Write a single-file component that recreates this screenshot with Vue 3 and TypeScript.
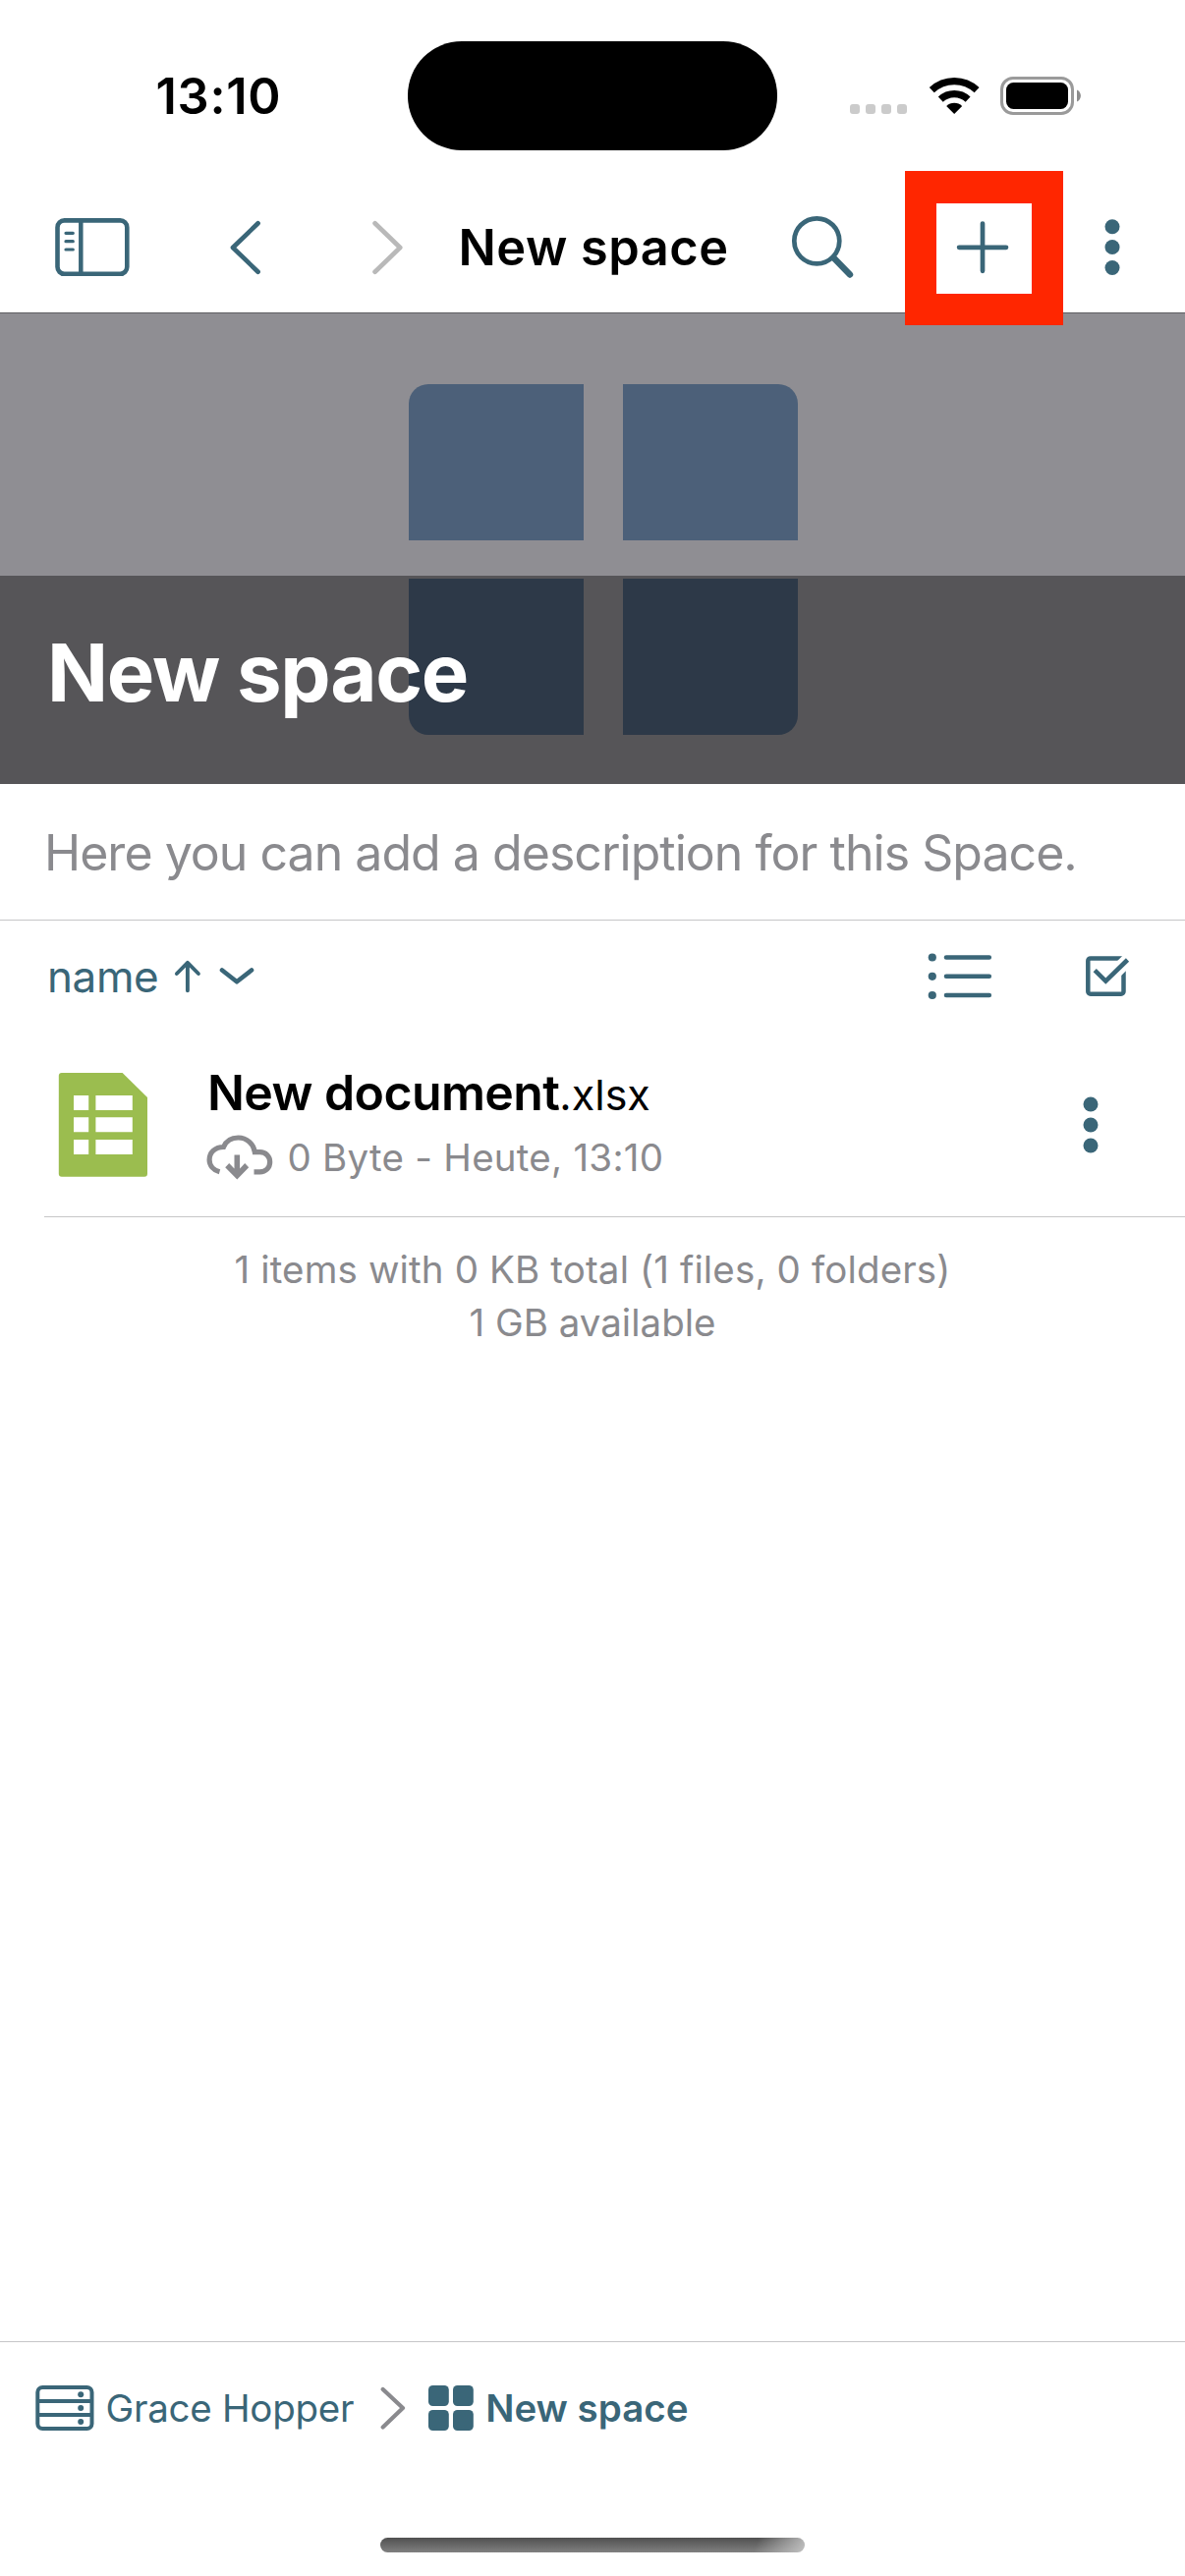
<script setup lang="ts">
interface Tile { name: string }

const space = {
  title: 'New space',
  description: 'Here you can add a description for this Space.',
  owner: 'Grace Hopper',
}
const tiles: Tile[] = [{ name: 'tl' }, { name: 'tr' }, { name: 'bl' }, { name: 'br' }]
const file = { base: 'New document', ext: '.xlsx', details: '0 Byte - Heute, 13:10' }
const summary: string[] = ['1 items with 0 KB total (1 files, 0 folders)', '1 GB available']
</script>

<template>
  <div class="screen">
    <header class="status">
      <span class="time">13:10</span>
      <div class="island"></div>
      <div class="indicators">
        <svg class="signal" width="58" height="40" viewBox="865 78 58 40" fill="#cbcbcb">
          <rect x="865" y="106" width="10" height="10" rx="3" />
          <rect x="881" y="106" width="10" height="10" rx="3" />
          <rect x="897" y="106" width="10" height="10" rx="3" />
          <rect x="913" y="106" width="10" height="10" rx="3" />
        </svg>
        <svg class="wifi" width="52" height="40" viewBox="944.5 78 52 40">
          <g fill="none" stroke="#000" stroke-width="7.2">
            <path d="M947.8 91.7A33.4 33.4 0 0 1 993.6 91.7" />
            <path d="M956.8 101.2A20.3 20.3 0 0 1 984.6 101.2" />
          </g>
          <path d="M970.7 116L962.7 108A11.4 11.4 0 0 1 978.7 108Z" />
        </svg>
        <svg class="battery" width="84" height="40" viewBox="1017 78 84 40">
          <rect x="1019.5" y="79.5" width="72" height="36" rx="11.5" fill="none" stroke="#9a9a9a" stroke-width="3" />
          <rect x="1024" y="84" width="63" height="27" rx="7.5" />
          <path d="M1096 91.5C1101.2 93.5 1101.2 101.500 1096 103.500Z" fill="#8c8c8c" />
        </svg>
      </div>
    </header>

    <nav class="toolbar">
      <svg class="ico sidebar" width="76" height="60" viewBox="56 222 76 60">
        <g fill="none" stroke="currentColor">
          <rect x="58.500" y="224.400" width="70.800" height="54.400" rx="7" stroke-width="4.600" />
          <path d="M82.300 224V279" stroke-width="4.500" />
          <path d="M67 237.300H74.300M67 245.700H74.300M67 254H74.300" stroke-width="3.200" stroke-linecap="round" />
        </g>
      </svg>
      <svg class="ico back" width="32" height="56" viewBox="234 224 32 56">
        <path d="M262.600 227.300L237 252L262.600 276.700" fill="none" stroke="currentColor" stroke-width="4.700" stroke-linecap="round" stroke-linejoin="round" />
      </svg>
      <svg class="ico forward" width="32" height="56" viewBox="379 224 32 56">
        <path d="M381.600 227.300L407.200 252L381.600 276.700" fill="none" stroke="#b9b9b9" stroke-width="4.700" stroke-linecap="round" stroke-linejoin="round" />
      </svg>
      <h1 class="nav-title">{{ space.title }}</h1>
      <svg class="ico search" width="64" height="68" viewBox="805 218 64 68">
        <g fill="none" stroke="currentColor">
          <circle cx="831.300" cy="245.300" r="23" stroke-width="4.700" />
          <path d="M848.500 262.500L865 279.500" stroke-width="6.400" stroke-linecap="round" />
        </g>
      </svg>
      <div class="add">
        <svg class="ico" width="54" height="54" viewBox="973.300 225 54 54">
          <path d="M1000.300 227.600V275.800M976.400 251.800H1024.300" stroke="currentColor" stroke-width="4.700" stroke-linecap="round" />
        </svg>
        <div class="marker"></div>
      </div>
      <svg class="ico more" width="16" height="60" viewBox="1124 222 16 60" fill="currentColor">
        <circle cx="1132" cy="230.700" r="7.500" />
        <circle cx="1132" cy="251.500" r="7.500" />
        <circle cx="1132" cy="272.500" r="7.500" />
      </svg>
    </nav>

    <section class="hero">
      <div class="tiles">
        <div v-for="t in tiles" :key="t.name" class="tile" :class="t.name"></div>
      </div>
      <div class="caption"><h2>{{ space.title }}</h2></div>
    </section>

    <p class="description"><span>{{ space.description }}</span></p>

    <div class="sortbar">
      <span class="sort">name</span>
      <svg class="ico arrow" width="28" height="34" viewBox="176.600 977 28 34">
        <path d="M190.500 980V1008.300M179.500 991L190.500 979.800L201.500 991" fill="none" stroke="currentColor" stroke-width="3.900" stroke-linecap="round" stroke-linejoin="round" />
      </svg>
      <svg class="ico caret" width="36" height="20" viewBox="223.500 984 36 20">
        <path d="M226.500 987.500L241.500 999.300L256.500 987.500" fill="none" stroke="currentColor" stroke-width="4.600" stroke-linecap="round" stroke-linejoin="round" />
      </svg>
      <svg class="ico list" width="66" height="48" viewBox="944 970 66 48">
        <g fill="currentColor">
          <circle cx="948.800" cy="974.500" r="4.100" />
          <circle cx="948.800" cy="993.800" r="4.100" />
          <circle cx="948.800" cy="1013" r="4.100" />
        </g>
        <path d="M963 974.500H1006.800M963 993.800H1006.800M963 1013H1006.800" stroke="currentColor" stroke-width="4.600" stroke-linecap="round" />
      </svg>
      <svg class="ico check" width="46" height="44" viewBox="1104 972 46 44">
        <rect x="1107.300" y="975.400" width="36.200" height="36.300" rx="2.500" fill="none" stroke="currentColor" stroke-width="4.500" />
        <path d="M1131 993.500L1155 970" fill="none" stroke="#fff" stroke-width="13.500" />
        <path d="M1114.200 987.700L1125.300 998.600L1147.500 977" fill="none" stroke="currentColor" stroke-width="4.600" />
      </svg>
    </div>

    <article class="file">
      <svg class="doc" width="92" height="106" viewBox="59 1092 92 106">
        <path d="M62.800 1092H124.600L150 1117V1194.700Q150 1197.700 147 1197.700H62.800Q59.800 1197.700 59.800 1194.700V1095Q59.800 1092 62.800 1092Z" fill="#9bbd4f" />
        <path d="M75 1115h15.200v15H75zM75 1137.300h15.200v15H75zM75 1160h15.200v15H75zM97.400 1115h37.400v15H97.400zM97.400 1137.300h37.400v15H97.400zM97.400 1160h37.400v15H97.400z" fill="#fff" />
      </svg>
      <div class="info">
        <div class="name"><b>{{ file.base }}</b><span>{{ file.ext }}</span></div>
        <div class="meta">
          <svg class="cloud" width="68" height="46" viewBox="209.500 1154.500 68 46">
            <path d="M223 1192.300C216.500 1190.500 212.600 1185.500 212.600 1180C212.600 1172.500 218.500 1167 227 1167C229.500 1161 235 1157.500 242 1157.500C250.500 1157.500 257.500 1163.500 258.800 1172.200H264C270 1172.200 274.200 1176.500 274.200 1182.300C274.200 1188 270 1192.400 264 1192.400H258" fill="none" stroke="#8a8a8e" stroke-width="5.200" />
            <path d="M238 1175H243.600V1189L248.700 1183.500L252.700 1187.700L240.800 1200L228.700 1187.700L232.700 1183.500L238 1189Z" fill="#8a8a8e" />
          </svg>
          <span>{{ file.details }}</span>
        </div>
      </div>
      <svg class="ico row-more" width="16" height="60" viewBox="1101.200 1114.500 16 60" fill="currentColor">
        <circle cx="1109.200" cy="1123.500" r="7.500" />
        <circle cx="1109.200" cy="1144.500" r="7.500" />
        <circle cx="1109.200" cy="1165.500" r="7.500" />
      </svg>
    </article>

    <div class="summary">
      <p class="s1">{{ summary[0] }}</p>
      <p class="s2">{{ summary[1] }}</p>
    </div>

    <footer class="crumbs">
      <div class="path">
        <svg class="ico server" width="60" height="46" viewBox="35.500 2428 60 46">
          <g fill="none" stroke="currentColor" stroke-width="4">
            <rect x="37.800" y="2430" width="55.200" height="42" rx="5" />
            <path d="M38 2444H93M38 2458H93" />
          </g>
          <g fill="currentColor">
            <circle cx="81.700" cy="2437.200" r="3" />
            <circle cx="81.700" cy="2451" r="3" />
            <circle cx="81.700" cy="2465" r="3" />
          </g>
        </svg>
        <span class="owner">{{ space.owner }}</span>
        <svg class="sep" width="26" height="44" viewBox="386.500 2429 26 44">
          <path d="M389.200 2432L409.500 2451L389.200 2470.500" fill="none" stroke="#8a8a8e" stroke-width="4.200" stroke-linecap="round" stroke-linejoin="round" />
        </svg>
        <svg class="ico grid" width="46" height="46" viewBox="436.200 2428 46 46" fill="currentColor">
          <rect x="436.200" y="2428" width="20.800" height="21" rx="4.500" />
          <rect x="461.200" y="2428" width="20.800" height="21" rx="4.500" />
          <rect x="436.200" y="2453" width="20.800" height="21" rx="4.500" />
          <rect x="461.200" y="2453" width="20.800" height="21" rx="4.500" />
        </svg>
        <b class="current">{{ space.title }}</b>
      </div>
      <div class="home"></div>
    </footer>
  </div>
</template>

<style>
body { background: #fff; }
</style>

<style scoped>
.screen {
  width: 1206px;
  height: 2622px;
  display: flex;
  flex-direction: column;
  background: #fff;
  color: #000;
  font-family: Inter, "Liberation Sans", sans-serif;
  overflow: hidden;
}
h1, h2, p { margin: 0; }
svg { display: block; flex: none; }
span, b, h1, h2, p { white-space: nowrap; }
.ico { color: #3a6678; }

.status {
  height: 186px;
  box-sizing: border-box;
  padding: 42px 0 33px;
  display: grid;
  grid-template-columns: 415px 376px 1fr;
  align-items: center;
}
.time { padding-left: 158.500px; font-size: 50.500px; font-weight: 600; line-height: 60px; letter-spacing: 0.700px; }
.island { height: 110.500px; border-radius: 55px; background: #000; }
.indicators { display: flex; padding-left: 74px; }
.wifi { margin-left: 21.500px; }
.battery { margin-left: 20.500px; }

.toolbar { height: 132px; display: flex; align-items: center; }
.sidebar { margin-left: 56px; }
.back { margin-left: 102px; }
.forward { margin-left: 113px; }
.nav-title { margin-left: 55.500px; width: 338.500px; font-size: 50.500px; font-weight: 600; line-height: 60px; letter-spacing: 0.500px; }
.search { margin-left: 0; }
.add { position: relative; margin-left: 104.300px; }
.marker {
  position: absolute;
  left: -52.300px;
  top: -51px;
  width: 97px;
  height: 92px;
  border: 32.500px solid #ff2600;
  border-top-width: 33px;
  z-index: 2;
}
.more { margin-left: 97.200px; }

.hero {
  height: 480px;
  box-sizing: border-box;
  border-top: 1px solid #5d5d61;
  background: #8f8e93;
  position: relative;
}
.tiles {
  display: grid;
  grid-template-columns: 178px 178px;
  grid-auto-rows: 158.500px;
  column-gap: 39.400px;
  row-gap: 39.500px;
  padding: 72px 0 0 416.200px;
}
.tile { background: #4c6079; }
.tl { border-top-left-radius: 20px; }
.tr { border-top-right-radius: 20px; }
.bl { border-bottom-left-radius: 20px; }
.br { border-bottom-right-radius: 20px; }
.caption {
  position: absolute;
  left: 0;
  right: 0;
  bottom: 0;
  height: 212px;
  background: rgba(0, 0, 0, 0.4);
}
.caption h2 { padding: 49px 0 0 48px; font-size: 81.500px; font-weight: 700; line-height: 100px; letter-spacing: -1.300px; color: #fff; }

.description {
  height: 139px;
  box-sizing: border-box;
  border-bottom: 1px solid #c6c6c8;
  padding: 40px 0 0 45px;
  font-size: 50px;
  line-height: 60px;
  letter-spacing: -0.970px;
  color: #8a8a8e;
}

.sortbar { height: 114px; display: flex; align-items: center; }
.sort { margin-left: 48px; width: 128.600px; font-size: 44px; line-height: 54px; letter-spacing: -0.400px; color: #3a6678; }
.caret { margin-left: 18.900px; }
.list { margin-left: 684.500px; }
.check { margin-left: 94px; }

.file {
  height: 188px;
  box-sizing: border-box;
  border-bottom: 1px solid #c6c6c8;
  margin-left: 45px;
  display: flex;
  align-items: center;
}
.doc { margin-left: 14px; }
.info { margin-left: 58.500px; width: 892.300px; }
.name { height: 60px; line-height: 60px; display: flex; align-items: baseline; margin-top: -6.500px; padding-left: 1.500px; }
.name b { font-size: 50px; font-weight: 600; letter-spacing: -0.600px; }
.name span { font-size: 43px; }
.meta { display: flex; align-items: center; height: 46px; margin-top: 12.500px; font-size: 38.500px; letter-spacing: 0.250px; color: #8a8a8e; }
.meta span { margin-left: 15px; }

.summary { padding-top: 25.500px; text-align: center; font-size: 38.500px; line-height: 54px; color: #8a8a8e; }
.s1 { letter-spacing: 0.140px; }

.crumbs { margin-top: auto; height: 239px; box-sizing: border-box; border-top: 1px solid #c6c6c8; }
.path { display: flex; align-items: center; height: 134px; padding-left: 35.500px; color: #3a6678; font-size: 38.500px; }
.owner { margin-left: 12px; width: 279px; letter-spacing: -0.270px; }
.grid { margin-left: 23.700px; }
.current { margin-left: 12px; font-weight: 600; }
.home {
  width: 432px;
  height: 15px;
  margin: 65px auto 0 387px;
  border-radius: 8px;
  background:
    linear-gradient(110deg, rgba(200, 200, 200, 0) 88%, rgba(200, 200, 200, 0.9) 100%),
    linear-gradient(#505050, #808080);
}
</style>
